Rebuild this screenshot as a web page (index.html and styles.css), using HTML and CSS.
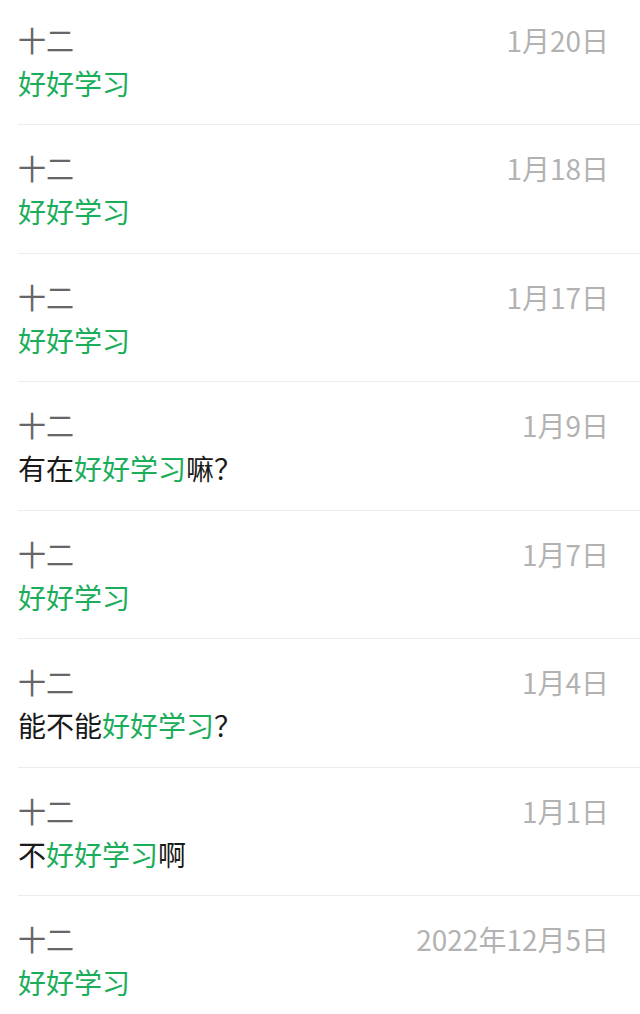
FILE: index.html
```html
<!DOCTYPE html>
<html lang="zh-CN">
<head>
  <meta charset="UTF-8">
  <meta name="viewport" content="width=device-width, initial-scale=1.0">
  <title>搜索结果</title>
  <link rel="stylesheet" href="styles.css">
</head>
<body>
  <!-- 聊天记录搜索结果 -->
  <ul class="result-list">
    <li class="result">
      <div class="result-head"><span class="name">十二</span><span class="date">1月20日</span></div>
      <p class="msg"><em>好好学习</em></p>
    </li>
    <li class="result">
      <div class="result-head"><span class="name">十二</span><span class="date">1月18日</span></div>
      <p class="msg"><em>好好学习</em></p>
    </li>
    <li class="result">
      <div class="result-head"><span class="name">十二</span><span class="date">1月17日</span></div>
      <p class="msg"><em>好好学习</em></p>
    </li>
    <li class="result">
      <div class="result-head"><span class="name">十二</span><span class="date">1月9日</span></div>
      <p class="msg">有在<em>好好学习</em>嘛？</p>
    </li>
    <li class="result">
      <div class="result-head"><span class="name">十二</span><span class="date">1月7日</span></div>
      <p class="msg"><em>好好学习</em></p>
    </li>
    <li class="result">
      <div class="result-head"><span class="name">十二</span><span class="date">1月4日</span></div>
      <p class="msg">能不能<em>好好学习</em>？</p>
    </li>
    <li class="result">
      <div class="result-head"><span class="name">十二</span><span class="date">1月1日</span></div>
      <p class="msg">不<em>好好学习</em>啊</p>
    </li>
    <li class="result">
      <div class="result-head"><span class="name">十二</span><span class="date">2022年12月5日</span></div>
      <p class="msg"><em>好好学习</em></p>
    </li>
  </ul>
</body>
</html>
```

FILE: styles.css
```css
/* 页面 */
body {
  margin: 0;
  padding: 0;
  background-color: #fff;
  font-family: "Noto Sans CJK SC", "Noto Sans", sans-serif;
  font-size: 28px;
  color: #1a1a1a;
}

/* 列表 */
.result-list {
  list-style: none;
  margin: -3.5px 0 0 18px;
  padding: 0;
}

.result {
  padding: 22px 31px 19.5px 0;
  border-bottom: 1px solid #ececec;
}

.result-head {
  display: flex;
  justify-content: space-between;
  line-height: 43px;
}

.name {
  color: #666;
}

.date {
  color: #b2b2b2;
}

.msg {
  margin: 0;
  line-height: 43px;
}

.msg em {
  font-style: normal;
  color: #1aad5a;
}
```
